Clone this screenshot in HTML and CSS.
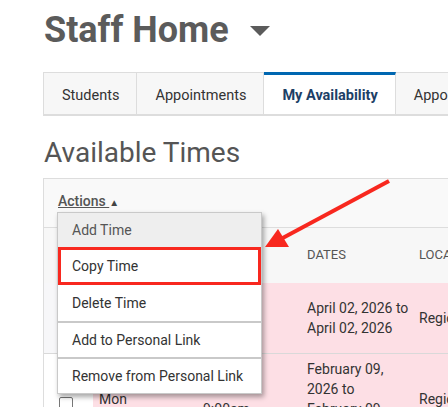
FILE: index.html
```html
<!DOCTYPE html>
<html lang="en">
  <head>
    <meta charset="utf-8">
    <title>Staff Home</title>
    <link rel="stylesheet" href="styles.css">
  </head>
  <body>
    <div class="page">
      <h1 class="page-title">Staff Home
        <svg class="title-caret" width="20" height="10" viewBox="0 0 20 10"><path d="M 0,0 h 20 l -10,10 z"/></svg>
      </h1>

      <nav class="tabs">
        <a class="tab">Students</a>
        <a class="tab">Appointments</a>
        <a class="tab active">My Availability</a>
        <a class="tab">Appointment Types</a>
      </nav>

      <h2 class="section-title">Available Times</h2>

      <div class="times">
        <div class="times-actions">
          <a class="actions-toggle">Actions </a><span class="actions-caret">&#9650;</span>
        </div>

        <ul class="actions-menu">
          <li class="menu-item hover">Add Time</li>
          <li class="menu-item marked">Copy Time</li>
          <li class="menu-item">Delete Time</li>
          <li class="menu-item split">Add to Personal Link</li>
          <li class="menu-item split">Remove from Personal Link</li>
        </ul>

        <table class="times-table">
          <colgroup>
            <col style="width: 49px">
            <col style="width: 104px">
            <col style="width: 104px">
            <col style="width: 112px">
            <col style="width: 160px">
          </colgroup>
          <thead>
            <tr>
              <th></th>
              <th>Day</th>
              <th>Time</th>
              <th>Dates</th>
              <th>Location</th>
            </tr>
          </thead>
          <tbody>
            <tr class="flagged first">
              <td class="check"><span class="checkbox"></span></td>
              <td>Thu</td>
              <td>9:00am<br>to<br>10:00am</td>
              <td>April 02, 2026 to April 02, 2026</td>
              <td>Regional Office</td>
            </tr>
            <tr class="flagged">
              <td class="check"><span class="checkbox"></span></td>
              <td>Mon</td>
              <td>8:00am -<br>9:00am</td>
              <td>February 09, 2026 to February 09, 2026</td>
              <td>Regional Office</td>
            </tr>
          </tbody>
        </table>
      </div>

      <svg class="callout" width="448" height="407" viewBox="0 0 448 407">
        <line x1="389" y1="181" x2="279" y2="240"/>
        <polygon points="265,247 278,229 289,247"/>
      </svg>
    </div>
  </body>
</html>
```

FILE: styles.css
```css
html, body { margin: 0; background: #fff; }
body { font-family: Roboto, "Liberation Sans", sans-serif; color: #333; overflow: hidden; }
.page { position: relative; width: 448px; height: 407px; padding-left: 43px; box-sizing: border-box; overflow: hidden; }

.page-title { margin: 9px 0 0 1px; font-size: 36px; line-height: 42px; font-weight: 700; color: #5b5b5b; white-space: nowrap; }
.title-caret { margin-left: 12px; vertical-align: 6px; fill: #5b5b5b; }

.tabs { display: flex; margin-top: 21px; width: 600px; border-bottom: 2px solid #ddd; border-left: 1px solid #ddd; }
.tab { display: flex; align-items: center; height: 42px; box-sizing: border-box; padding: 3px 17px 0 18px; background: #f7f7f7; border-top: 1px solid #ddd; border-right: 1px solid #ddd; font-size: 14.5px; color: #333; white-space: nowrap; }
.tab.active { background: #fff; border-top: 3px solid #0067b1; padding-top: 1px; font-weight: 700; color: #1d3f66; }

.section-title { margin: 20px 0 8px 1px; font-size: 28px; line-height: 34px; font-weight: 400; color: #555; }

.times { position: relative; width: 600px; background: #f9f9f9; border-top: 1px solid #ddd; border-left: 1px solid #ddd; }
.times-actions { padding: 12px 14px 14px; line-height: 20px; font-size: 14px; }
.actions-toggle { font-weight: 500; color: #555; text-decoration: underline; white-space: pre; }
.actions-caret { font-size: 10px; color: #444; vertical-align: 0; }

.actions-menu { position: absolute; top: 33px; left: 13px; width: 203px; margin: 0; padding: 0; list-style: none; background: #fff; border: 1px solid #c9c9c9; box-shadow: 2px 3px 5px rgba(0, 0, 0, 0.35); z-index: 2; }
.menu-item { height: 36px; box-sizing: border-box; padding-left: 14px; display: flex; align-items: center; font-size: 14px; color: #333; white-space: nowrap; }
.menu-item.hover { height: 34px; background: #eee; color: #555; }
.menu-item.marked { height: 38px; border: 3px solid #f8281f; padding-left: 11px; }
.menu-item.split { border-top: 2px solid #c9c9c9; }

.times-table { border-collapse: collapse; table-layout: fixed; width: 529px; font-size: 14px; }
.times-table th { padding: 17px 2px 18px 6px; line-height: 20px; background: #f7f7f7; border-top: 1px solid #ddd; font-size: 13px; font-weight: 400; text-transform: uppercase; text-align: left; color: #555; }
.times-table td { padding: 5px 2px 5px 6px; line-height: 20px; vertical-align: middle; background: #fddfe5; color: #333; }
.times-table tr.first td { border-bottom: 1px solid #d9d9d9; }
.times-table td.check { background: #fff; padding: 0 0 0 15px; }
.times-table tr.first td.check { background: #f7f7f9; }
.checkbox { display: block; width: 14px; height: 14px; margin-top: 10px; background: #fff; border: 1px solid #777; border-radius: 2px; box-sizing: border-box; }

.callout { position: absolute; top: 0; left: 0; pointer-events: none; z-index: 3; }
.callout line { stroke: #f8281f; stroke-width: 4; }
.callout polygon { fill: #f8281f; }
```
